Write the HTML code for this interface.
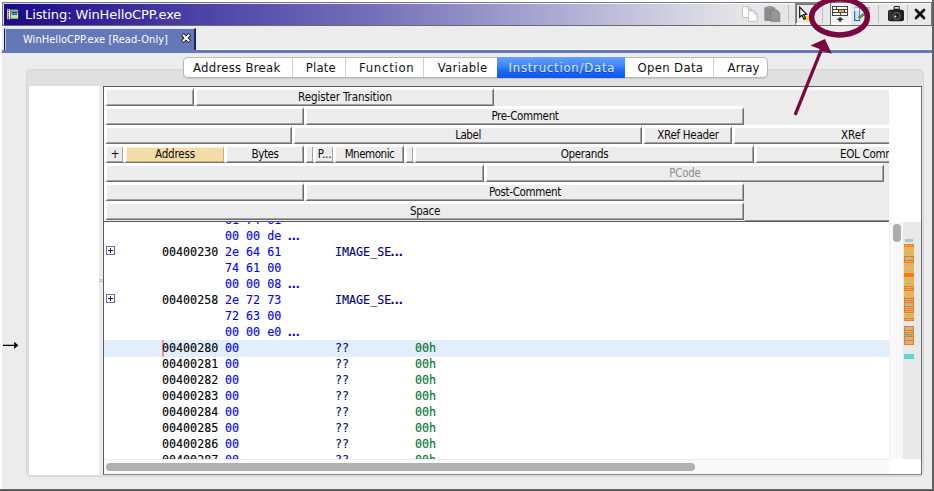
<!DOCTYPE html>
<html><head><meta charset="utf-8"><title>Listing: WinHelloCPP.exe</title>
<style>
html,body{margin:0;padding:0}
body{width:934px;height:491px;overflow:hidden;background:#ececec;position:relative;font-family:"Liberation Sans","DejaVu Sans",sans-serif}
div,span,i,b{box-sizing:border-box}
#title{position:absolute;left:2px;top:2px;width:930px;height:24px;border:1px solid #787878;border-bottom-color:#6a6a6a;box-shadow:inset 1px 1px 0 rgba(255,255,255,.85);background:linear-gradient(90deg,#1e0a8c 0%,#1e0a8c 1%,#4a3fa4 20%,#7670ba 40%,#afadd4 60.5%,#d4d4e2 73.5%,#e5e5e7 79.5%,#e9e9e9 100%)}
#title .tx{position:absolute;left:22px;top:4px;color:#fff;font:13px "DejaVu Sans","Liberation Sans",sans-serif;letter-spacing:-0.1px;white-space:nowrap;line-height:16px}
#tab{position:absolute;left:4px;top:28px;width:192px;height:22px;background:#6477b6;border-left:1px solid #141c4a;border-right:2px solid #1c2452;border-top:1px solid #d4e3ff;box-shadow:inset 1px 0 0 #b4c2ec}
#tab .tx{position:absolute;left:18px;top:4px;color:#fff;font:11px "DejaVu Sans Condensed","Liberation Sans",sans-serif;white-space:nowrap;line-height:13px;letter-spacing:0.05px}
#blue{position:absolute;left:2px;top:50px;width:930px;height:3px;background:#6477b6}
#blueh{position:absolute;left:196px;top:49px;width:736px;height:1px;background:#fafafa}
#panel{position:absolute;left:26px;top:69px;width:898px;height:408px;background:#e0e0e0;border:1px solid #d6d6d6;border-radius:5px}
#white{position:absolute;left:29px;top:86px;width:893px;height:389px;background:#fff}
#segs{position:absolute;left:184px;top:58px;width:583px;height:19px;background:#fff;border-radius:4px;box-shadow:0 0 0 1px #b9b9b9,0 1px 1px 1px #c6c6c6}
.seg{position:absolute;top:0;height:19px;color:#111;font:13px/19px "DejaVu Sans Condensed","Liberation Sans",sans-serif;white-space:nowrap}
.seg span{position:absolute;top:-0.5px}
.seg.dv{border-left:1px solid #cfcfcf}
.seg.on{top:-1px;height:21px;line-height:21px;background:linear-gradient(180deg,#62a1fb 0%,#3f88f9 40%,#1f6af6 65%,#0d55f0 100%);color:#e4edff;text-shadow:0 1px 0 rgba(0,20,120,.45)}
#list{position:absolute;left:103px;top:86px;width:819px;height:389px;border:1px solid #5c5c5c;border-bottom-color:#868686;border-right-color:#6e6e6e;overflow:hidden;background:#fff}
#hdr{position:absolute;left:104px;top:87px;width:785px;height:134px;background:#ececec;overflow:hidden;border-top:3px solid #fff;border-left:1px solid #fff}
#hline2{position:absolute;left:745px;top:220px;width:144px;height:1px;background:#8e8e8e}
#hline{position:absolute;left:104px;top:221px;width:785px;height:1px;background:#5a5a5a}
.fb{position:absolute;height:18px;background:#ececec;border-top:2px solid #fff;border-left:2px solid #fff;border-bottom:1px solid #6f6f6f;border-right:1px solid #6f6f6f;box-shadow:inset -1px -1px 0 #a2a2a2,-1px -1px 0 #fff;font:11.5px/13px "DejaVu Sans Condensed","Liberation Sans",sans-serif;padding-top:1px;text-align:center;color:#0a0a0a;white-space:nowrap;overflow:hidden;letter-spacing:-0.15px}
.fb.sel{background:#f3dca8;border-bottom-color:#7c7056;border-right-color:#7c7056;box-shadow:inset -1px -1px 0 #c4b084,inset 1px 1px 0 #fbf0d6,-1px -1px 0 #fff}
.fb.dis{color:#8e8e8e}
.fb.left{text-align:left}
#code{position:absolute;left:104px;top:222px;width:785px;height:237px;overflow:hidden;background:#fff;font:12px/16px "DejaVu Sans Mono","Liberation Mono",monospace}
.ln{position:absolute;left:0;width:785px;height:16px;white-space:pre}
.ln.hl{background:#e3eefc;height:17px}
.ln span{position:absolute;top:0;-webkit-text-stroke:0.12px;transform:scaleX(0.973);transform-origin:0 0}
.ad{left:58px;color:#000}
.by{left:121px;color:#0000ff}
.mn{left:231px;color:#000080}
.op{left:311px;color:#00722c}
.dt{font-weight:bold;letter-spacing:-3.05px;margin-left:-2.2px}
.plus{position:absolute;left:2px;top:2px;width:9px;height:9px;border:1px solid #6a6aa6;background:
 linear-gradient(#1c1c5c,#1c1c5c) 1px 3px/5px 1px no-repeat,linear-gradient(#1c1c5c,#1c1c5c) 3px 1px/1px 5px no-repeat,#fff}
.cur{position:absolute;left:58px;top:0;width:2px;height:17px;background:#f59494}

#wtop{position:absolute;left:0;top:0;width:934px;height:2px;background:#fdfdfd}
#wleft{position:absolute;left:0;top:0;width:2px;height:491px;background:#fdfdfd}
#wright{position:absolute;left:932px;top:0;width:2px;height:491px;background:linear-gradient(90deg,#6c6c6c,#555)}
#wbot{position:absolute;left:0;top:489px;width:934px;height:2px;background:linear-gradient(180deg,#6e6e6e,#4c4c4c)}
#vsb{position:absolute;left:889px;top:222px;width:14px;height:237px;background:#f8f8f8;border-left:1px solid #f0f0f0}
#vth{position:absolute;left:893px;top:224px;width:8px;height:18px;border-radius:4px;background:#acacac}
#ovw{position:absolute;left:903px;top:222px;width:18px;height:237px;background:#e8e8e8}
#hsb{position:absolute;left:104px;top:459px;width:785px;height:15px;background:#f9f9f9;border-top:1px solid #ececec}
#hth{position:absolute;left:106px;top:463px;width:589px;height:8px;border-radius:4px;background:#b0b0b0}
#split{position:absolute;left:99px;top:86px;width:4px;height:389px;background:#ebebeb}
#grip{position:absolute;left:99px;top:277px;width:4px;height:7px;background:#d2d2d2;border-top:1px solid #fff;border-bottom:1px solid #fff}
svg{position:absolute;left:0;top:0;overflow:visible}
</style></head><body>
<div id="title"><span class="tx">Listing: WinHelloCPP.exe</span></div>
<div id="tab"><span class="tx">WinHelloCPP.exe [Read-Only]</span></div>
<div id="blueh"></div><div id="blue"></div>
<div id="panel"></div>
<div id="white"></div>
<div id="split"></div><div id="grip"></div>
<div id="segs"><div class="seg" style="left:0px;width:108px;letter-spacing:0.279px"><span style="left:9px">Address Break</span></div><div class="seg dv" style="left:108px;width:53px;letter-spacing:0.187px"><span style="left:12.8px">Plate</span></div><div class="seg dv" style="left:161px;width:78px;letter-spacing:0.72px"><span style="left:13px">Function</span></div><div class="seg dv" style="left:239px;width:74px;letter-spacing:0.335px"><span style="left:13.7px">Variable</span></div><div class="seg on" style="left:313px;width:128px;letter-spacing:0.768px"><span style="left:11.5px">Instruction/Data</span></div><div class="seg" style="left:441px;width:88px;letter-spacing:0.311px"><span style="left:12.6px">Open Data</span></div><div class="seg dv" style="left:529px;width:54px;letter-spacing:0.113px"><span style="left:13.6px">Array</span></div></div>
<div id="list"></div>
<div id="hdr"></div><div id="hline"></div><div id="hline2"></div>
<div id="hdrb" style="position:absolute;left:0;top:0;width:889px;height:221px;overflow:hidden;clip-path:inset(87px 0 0 104px)">
<div class="fb " style="left:105px;top:88px;width:89px"></div>
<div class="fb " style="left:195px;top:88px;width:299px;letter-spacing:-0.1px">Register Transition</div>
<div class="fb " style="left:105px;top:107px;width:199px"></div>
<div class="fb " style="left:305px;top:107px;width:439px;letter-spacing:-0.33px">Pre-Comment</div>
<div class="fb " style="left:105px;top:126px;width:187px"></div>
<div class="fb " style="left:293px;top:126px;width:349px;letter-spacing:-0.45px">Label</div>
<div class="fb " style="left:643px;top:126px;width:89px;letter-spacing:-0.29px">XRef Header</div>
<div class="fb left" style="left:733px;top:126px;width:267px"><span style="position:absolute;left:106px;letter-spacing:0">XRef</span></div>
<div class="fb " style="left:105px;top:145px;width:19px">+</div>
<div class="fb sel" style="left:124px;top:145px;width:101px;letter-spacing:-0.15px">Address</div>
<div class="fb " style="left:225px;top:145px;width:79px;letter-spacing:-0.4px">Bytes</div>
<div class="fb " style="left:305px;top:145px;width:9px"></div>
<div class="fb " style="left:314px;top:145px;width:20px">P...</div>
<div class="fb " style="left:334px;top:145px;width:70px;letter-spacing:-0.46px">Mnemonic</div>
<div class="fb " style="left:405px;top:145px;width:9px"></div>
<div class="fb " style="left:414px;top:145px;width:340px;letter-spacing:-0.31px">Operands</div>
<div class="fb left" style="left:755px;top:145px;width:245px"><span style="position:absolute;left:83px;letter-spacing:-0.3px">EOL Comment</span></div>
<div class="fb " style="left:105px;top:164px;width:379px"></div>
<div class="fb dis" style="left:485px;top:164px;width:399px;letter-spacing:-0.27px">PCode</div>
<div class="fb " style="left:105px;top:183px;width:199px"></div>
<div class="fb " style="left:305px;top:183px;width:439px;letter-spacing:-0.33px">Post-Comment</div>
<div class="fb " style="left:105px;top:202px;width:639px;letter-spacing:-0.32px">Space</div>
</div>
<div id="code" style="">
<div class="ln" style="top:-10px"><span class="by">61 74 61</span></div>
<div class="ln" style="top:6px"><span class="by">00 00 de <b class="dt">...</b></span></div>
<div class="ln" style="top:22px"><i class="plus"></i><span class="ad">00400230</span><span class="by">2e 64 61</span><span class="mn">IMAGE_SE<b class="dt">...</b></span></div>
<div class="ln" style="top:38px"><span class="by">74 61 00</span></div>
<div class="ln" style="top:54px"><span class="by">00 00 08 <b class="dt">...</b></span></div>
<div class="ln" style="top:70px"><i class="plus"></i><span class="ad">00400258</span><span class="by">2e 72 73</span><span class="mn">IMAGE_SE<b class="dt">...</b></span></div>
<div class="ln" style="top:86px"><span class="by">72 63 00</span></div>
<div class="ln" style="top:102px"><span class="by">00 00 e0 <b class="dt">...</b></span></div>
<div class="ln hl" style="top:118px"><i class="cur"></i><span class="ad">00400280</span><span class="by">00</span><span class="mn">??</span><span class="op">00h</span></div>
<div class="ln" style="top:134px"><span class="ad">00400281</span><span class="by">00</span><span class="mn">??</span><span class="op">00h</span></div>
<div class="ln" style="top:150px"><span class="ad">00400282</span><span class="by">00</span><span class="mn">??</span><span class="op">00h</span></div>
<div class="ln" style="top:166px"><span class="ad">00400283</span><span class="by">00</span><span class="mn">??</span><span class="op">00h</span></div>
<div class="ln" style="top:182px"><span class="ad">00400284</span><span class="by">00</span><span class="mn">??</span><span class="op">00h</span></div>
<div class="ln" style="top:198px"><span class="ad">00400285</span><span class="by">00</span><span class="mn">??</span><span class="op">00h</span></div>
<div class="ln" style="top:214px"><span class="ad">00400286</span><span class="by">00</span><span class="mn">??</span><span class="op">00h</span></div>
<div class="ln" style="top:230px"><span class="ad">00400287</span><span class="by">00</span><span class="mn">??</span><span class="op">00h</span></div>
</div>
<div id="vsb"></div><div id="vth"></div><div id="ovw"></div>
<div id="hsb"></div><div id="hth"></div>
<svg width="934" height="491" viewBox="0 0 934 491" shape-rendering="crispEdges"><rect x="904" y="238" width="10" height="5" fill="#dfe7f3"/><rect x="905" y="239.3" width="8" height="2.6" fill="#bdbdbd"/><rect x="904" y="243.8" width="10" height="3.2" fill="#f5781e"/><rect x="905.2" y="245.2" width="7.6" height="0.9" fill="#c9b48c"/><rect x="904" y="247" width="10" height="8.5" fill="#fbb826"/><rect x="905.2" y="248.3" width="7.6" height="0.7" fill="#c9b48c"/><rect x="905.2" y="250" width="7.6" height="0.7" fill="#c9b48c"/><rect x="905.2" y="252" width="7.6" height="3" fill="#c9b48c"/><rect x="904" y="255.5" width="10" height="7.5" fill="#f5781e"/><rect x="905.2" y="257.1" width="7.6" height="3" fill="#c9b48c"/><rect x="905.2" y="261.2" width="7.6" height="0.7" fill="#c9b48c"/><rect x="904" y="263" width="10" height="10" fill="#fbb826"/><rect x="905.2" y="264.1" width="7.6" height="3.2" fill="#c9b48c"/><rect x="905.2" y="269.2" width="7.6" height="3" fill="#c9b48c"/><rect x="904" y="273" width="10" height="4" fill="#f5781e"/><rect x="905.2" y="274.5" width="7.6" height="0.9" fill="#c9b48c"/><rect x="904" y="277" width="10" height="9.2" fill="#fbb826"/><rect x="905.2" y="278" width="7.6" height="3" fill="#c9b48c"/><rect x="905.2" y="282.3" width="7.6" height="3" fill="#c9b48c"/><rect x="904" y="286.2" width="10" height="5.2" fill="#f5781e"/><rect x="905.2" y="287.1" width="7.6" height="0.7" fill="#c9b48c"/><rect x="905.2" y="288.8" width="7.6" height="0.7" fill="#c9b48c"/><rect x="904" y="291.4" width="10" height="5.2" fill="#fbb826"/><rect x="905.2" y="292.7" width="7.6" height="3" fill="#c9b48c"/><rect x="904" y="296.6" width="10" height="16.4" fill="#f5781e"/><rect x="905.2" y="297.1" width="7.6" height="0.7" fill="#c9b48c"/><rect x="905.2" y="298.8" width="7.6" height="1.1" fill="#c9b48c"/><rect x="905.2" y="300.9" width="7.6" height="1.1" fill="#c9b48c"/><rect x="905.2" y="303.2" width="7.6" height="2.5" fill="#c9b48c"/><rect x="905.2" y="307.1" width="7.6" height="0.8" fill="#c9b48c"/><rect x="905.2" y="309.2" width="7.6" height="0.8" fill="#c9b48c"/><rect x="905.2" y="311" width="7.6" height="0.8" fill="#c9b48c"/><rect x="904" y="313" width="10" height="4.7" fill="#fbb826"/><rect x="905.2" y="314" width="7.6" height="3" fill="#c9b48c"/><rect x="904" y="317.7" width="10" height="3.3" fill="#f5781e"/><rect x="905.2" y="319" width="7.6" height="0.8" fill="#c9b48c"/><rect x="904" y="325.8" width="10" height="9.5" fill="#f5781e"/><rect x="905.2" y="327.2" width="7.6" height="2.5" fill="#c9b48c"/><rect x="905.2" y="330.9" width="7.6" height="0.8" fill="#c9b48c"/><rect x="905.2" y="332.8" width="7.6" height="0.8" fill="#c9b48c"/><rect x="904" y="336" width="10" height="8.9" fill="#f5781e"/><rect x="905.2" y="337.1" width="7.6" height="2.5" fill="#c9b48c"/><rect x="905.2" y="341" width="7.6" height="2.8" fill="#c9b48c"/><rect x="904" y="335.2" width="10" height="0.9" fill="#3fd8c0"/><rect x="904" y="353.9" width="10" height="5.2" fill="#2ee8ea"/><rect x="905.3" y="355.3" width="7.4" height="2.5" fill="#8fc4c4"/></svg>
<svg id="icons" width="934" height="60" viewBox="0 0 934 60">
<!-- title icon -->
<g>
<rect x="6.5" y="9" width="13" height="10.5" fill="#1a1a1a"/>
<rect x="7" y="9.3" width="3.4" height="10" fill="#f4f4f4"/>
<g fill="#111"><rect x="7.6" y="10" width="1.3" height="1.2"/><rect x="7.6" y="12.1" width="1.3" height="1.2"/><rect x="7.6" y="14.2" width="1.3" height="1.2"/><rect x="7.6" y="16.3" width="1.3" height="1.2"/><rect x="7.6" y="18.2" width="1.3" height="1"/></g>
<rect x="11" y="9.6" width="7.2" height="9.4" fill="url(#gpic)"/>
<rect x="12" y="12" width="5" height="1.2" fill="#1c3a5e"/><rect x="12" y="14" width="5" height="0.9" fill="#29466a"/>
</g>
<defs>
<linearGradient id="gpic" x1="0" y1="0" x2="0" y2="1"><stop offset="0" stop-color="#8ed08c"/><stop offset="0.25" stop-color="#5f8fc8"/><stop offset="0.55" stop-color="#a8d4e0"/><stop offset="0.75" stop-color="#cfe8d0"/><stop offset="1" stop-color="#6fae7a"/></linearGradient>
<linearGradient id="gpage" x1="1" y1="0" x2="0" y2="1"><stop offset="0" stop-color="#ececec"/><stop offset="0.5" stop-color="#fdfdfd"/><stop offset="1" stop-color="#fff"/></linearGradient>
<radialGradient id="glens" cx="0.5" cy="0.5" r="0.5"><stop offset="0" stop-color="#111"/><stop offset="0.55" stop-color="#2a2f33"/><stop offset="0.8" stop-color="#5a6064"/><stop offset="1" stop-color="#222"/></radialGradient>
</defs>
<!-- tab close X -->
<g stroke-linecap="butt"><path d="M182.4 34.3 L189.8 41.7 M189.8 34.3 L182.4 41.7" stroke="#111" stroke-width="3.8"/><path d="M182.9 34.8 L189.3 41.2 M189.3 34.8 L182.9 41.2" stroke="#fff" stroke-width="2.1"/></g>
<!-- copy icon -->
<g stroke="#bcbcbc" stroke-width="0.9" fill="url(#gpage)">
<path d="M742.5 6.5 h5.6 l3 3 v8 h-8.6 z"/><path d="M748.1 6.5 v3 h3" fill="none"/>
<path d="M748.6 10.7 h5.6 l3 3 v7.6 h-8.6 z"/><path d="M754.2 10.7 v3 h3" fill="none"/>
</g>
<!-- paste icon -->
<g>
<path d="M764.3 8.6 q0 -1.5 1.5 -1.5 h1.2 q0.3 -1 1.3 -1 h3 q1 0 1.3 1 h1.2 q1.5 0 1.5 1.5 v11 q0 1.3 -1.3 1.3 h-8.4 q-1.3 0 -1.3 -1.3 z" fill="#8b8b8b"/>
<rect x="767.3" y="6.4" width="5" height="2.2" rx="0.8" fill="#9a9a9a"/>
<path d="M771 9.9 h5.8 l3 3 v8.7 h-8.8 z" fill="#969696" stroke="#7f7f7f" stroke-width="0.8"/>
</g>
<!-- separators -->
<g fill="#c2c2c2"><rect x="788" y="5" width="1" height="18"/><rect x="822" y="5" width="1" height="18"/><rect x="878" y="5" width="1" height="18"/><rect x="907" y="5" width="1" height="18"/></g>
<!-- toggle 1 (pressed) -->
<g shape-rendering="crispEdges"><rect x="795" y="3" width="21" height="22" fill="#ebebeb"/><rect x="795" y="3" width="21" height="1" fill="#8a8a8a"/><rect x="795" y="4" width="21" height="1" fill="#6f6f6f"/><rect x="795" y="3" width="1" height="22" fill="#8a8a8a"/><rect x="796" y="4" width="1" height="20" fill="#6f6f6f"/><rect x="796" y="23" width="20" height="2" fill="#fafafa"/></g>
<rect x="804.5" y="16" width="6" height="5" fill="#fdd43a"/>
<path d="M799.7 7.2 L799.7 17.2 L802 15.2 L803.9 19.3 L805.6 18.5 L803.7 14.6 L806.6 14.3 Z" fill="#fff" stroke="#000" stroke-width="1.1" stroke-linejoin="miter"/>
<!-- toggle 2 (selected) -->
<g shape-rendering="crispEdges"><rect x="830" y="3" width="21" height="22" fill="#f2f2f2"/><rect x="830" y="3" width="1" height="22" fill="#777"/><rect x="831" y="23" width="20" height="2" fill="#fcfcfc"/><rect x="849" y="5" width="2" height="20" fill="#fafafa"/></g>
<g shape-rendering="crispEdges"><rect x="832" y="6" width="16" height="10" fill="#444"/>
<g fill="#fff"><rect x="833" y="7" width="3" height="2"/><rect x="837" y="7" width="10" height="2"/><rect x="833" y="10" width="5" height="2"/><rect x="845" y="10" width="2" height="2"/><rect x="833" y="13" width="7" height="2"/><rect x="841" y="13" width="6" height="2"/></g>
<rect x="839" y="10" width="5" height="2" fill="#f9a825"/></g>
<path d="M840.1 16.9 L843.8 20 L841.3 20 L841.3 21.8 L838.9 21.8 L838.9 20 L836.4 20 Z" fill="#333"/>
<!-- edit icon -->
<g>
<rect x="854" y="7" width="16" height="1.3" fill="#8db4f2"/>
<rect x="854" y="9.2" width="3.6" height="1" fill="#6abf4b"/><rect x="866" y="9.2" width="4" height="1" fill="#6abf4b"/>
<rect x="855.2" y="8.3" width="4" height="11.6" fill="#f4f8ff"/><rect x="854" y="11" width="1.3" height="10" fill="#3b6fd0"/>
<rect x="859" y="8" width="1" height="13" fill="#5a8ae0"/>
<g fill="#9cbcf0"><rect x="855.4" y="11.4" width="3.6" height="0.9"/><rect x="855.4" y="13.4" width="3.6" height="0.9"/><rect x="855.4" y="15.4" width="3.6" height="0.9"/><rect x="855.4" y="17.4" width="3.6" height="0.9"/></g>
<rect x="854" y="19.8" width="6.2" height="1.3" fill="#2f62c8"/>
<rect x="866" y="10.5" width="4" height="6" fill="#bcd2f6"/>
<path d="M858.4 16.6 L860 17.3 L864 14" stroke="#3a9a2c" stroke-width="2.4" fill="none"/>
</g>
<!-- camera -->
<g>
<rect x="893.6" y="6" width="6.2" height="5" rx="1" fill="#1d1d1d"/>
<rect x="894.6" y="7" width="4.2" height="1.7" fill="#e0e0e0"/>
<rect x="888" y="9.8" width="16" height="11.4" rx="2" fill="#1e1f20"/>
<rect x="889" y="11" width="2.4" height="9" fill="#34383b"/>
<circle cx="896.6" cy="16" r="4.6" fill="url(#glens)"/>
<circle cx="895.4" cy="16.6" r="1" fill="#f2f2f2"/>
</g>
<!-- close X -->
<path d="M916 10 L924 18 M924 10 L916 18" stroke="#000" stroke-width="2.6" stroke-linecap="round"/>
</svg>
<div id="wtop"></div><div id="wleft"></div><div id="wright"></div><div id="wbot"></div>
<svg id="anno" width="934" height="491" viewBox="0 0 934 491">
<ellipse cx="839.5" cy="17" rx="27.9" ry="17.9" fill="none" stroke="#7a0642" stroke-width="5.5"/>
<path d="M795.1 114.9 L821.4 49.5" stroke="#7a0642" stroke-width="3.3" fill="none" stroke-linecap="butt"/>
<path d="M824.9 38.9 L831.8 53.7 L822.8 50.9 L819.6 48.9 L810.5 45.6 Z" fill="#7a0642"/>
<!-- left arrow -->
<path d="M3 344.7 H14.2 V341.7 L18.3 345.3 L14.2 348.9 V345.9 H3 Z" fill="#000"/>
</svg>
</body></html>
